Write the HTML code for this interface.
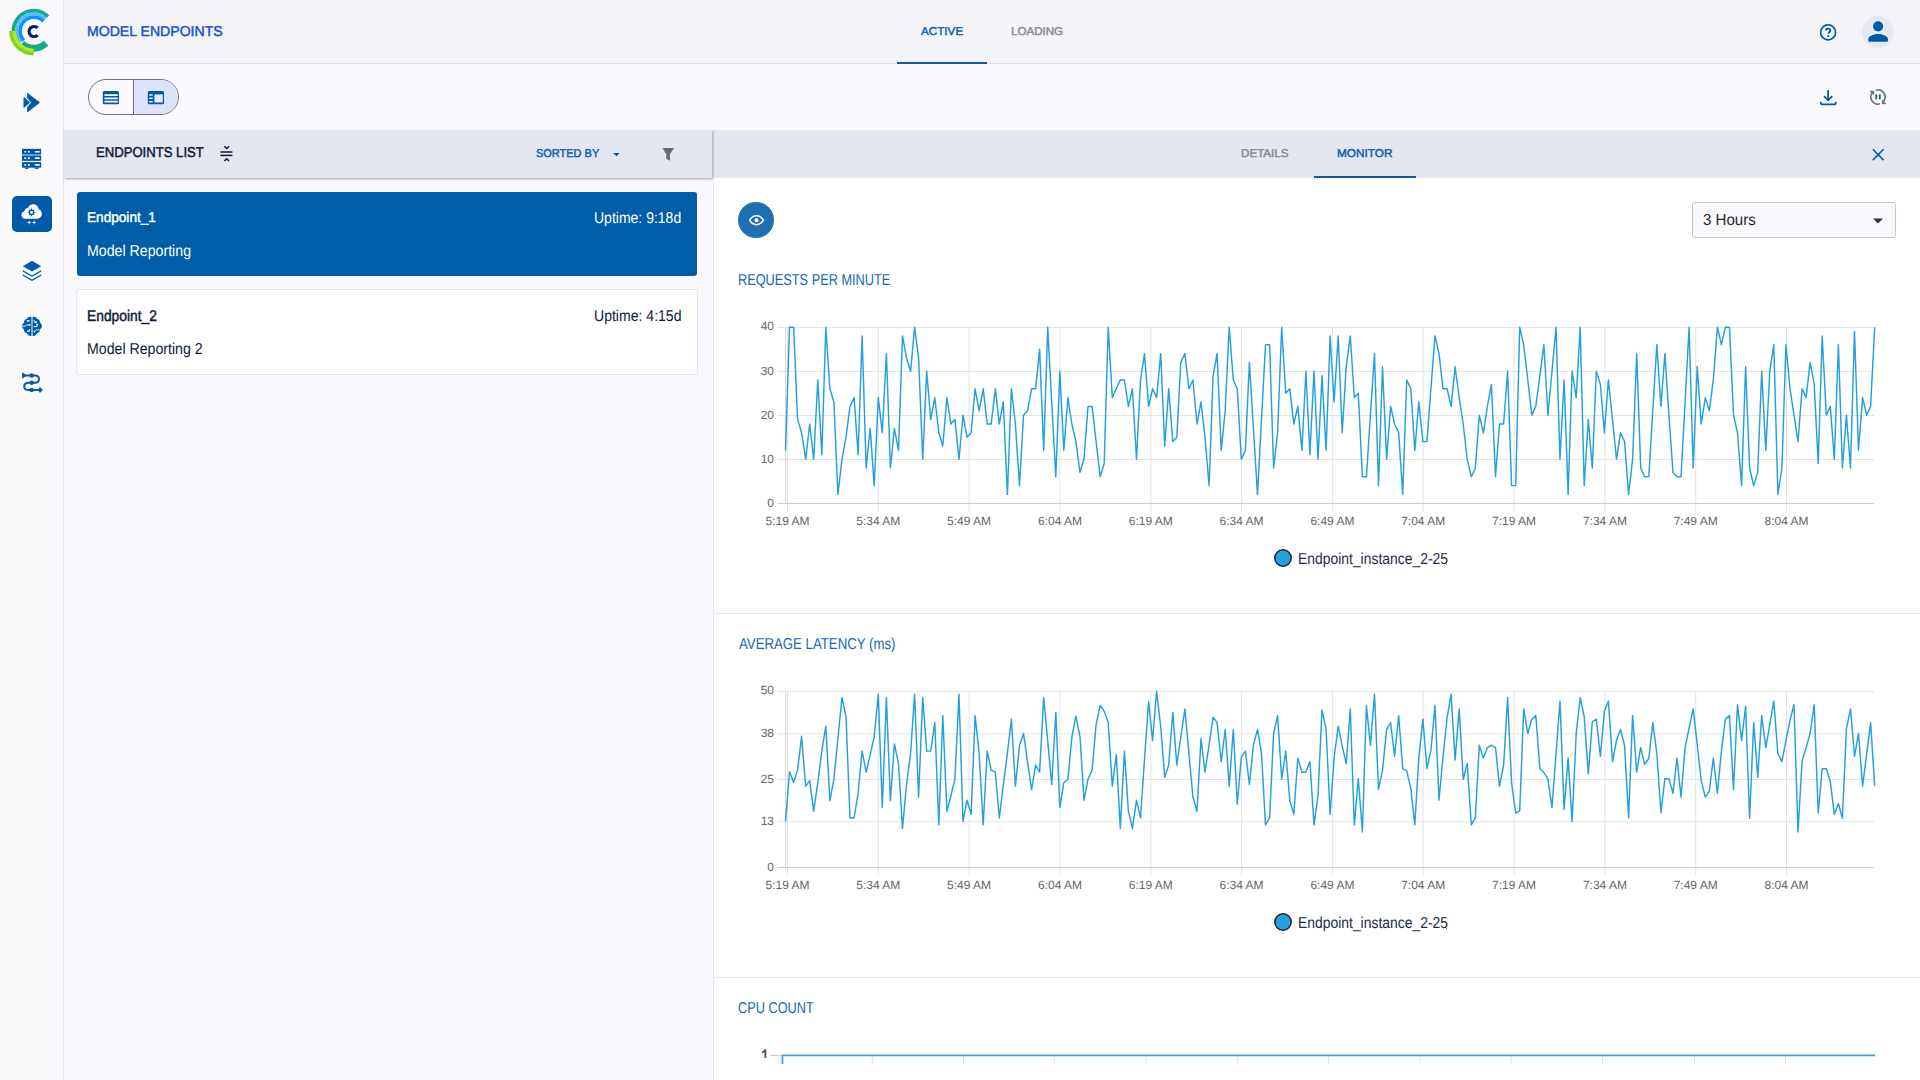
<!DOCTYPE html>
<html>
<head>
<meta charset="utf-8">
<style>
*{box-sizing:border-box;margin:0;padding:0}
html,body{width:1920px;height:1080px;overflow:hidden}
body{font-family:"Liberation Sans",sans-serif;background:#fafafd;position:relative}
.abs{position:absolute}
#sidebar{left:0;top:0;width:64px;height:1080px;background:#fafafd;border-right:1px solid #e4e6ef}
#header{left:64px;top:0;width:1856px;height:64px;background:#f4f4f9;border-bottom:1px solid #dfe3ee}
#toolbar{left:64px;top:64px;width:1856px;height:66px;background:#f9f9fe}
#listpanel{left:64px;top:130px;width:650px;height:950px;background:#f9f8fe;border-right:1px solid #e4e7f0}
#listhead{left:64px;top:130px;width:648px;height:48px;background:#e4e7f0;box-shadow:0.5px 1px 2px rgba(0,0,0,0.35)}
#rightpanel{left:714px;top:130px;width:1206px;height:950px;background:#ffffff}
#righthead{left:713px;top:130px;width:1207px;height:48px;background:#e4e7f0}
.txt{position:absolute;white-space:nowrap;line-height:1;text-rendering:geometricPrecision}
.card{position:absolute;left:77px;width:620px;height:84px;border-radius:3px}
.divider{position:absolute;left:714px;width:1206px;height:1px;background:#e4e7f0}
svg text.yl,svg text.xl{font-family:"Liberation Sans",sans-serif;font-size:12px;fill:#666666;text-rendering:geometricPrecision}
</style>
</head>
<body>
<div id="sidebar" class="abs">
  <!-- logo -->
  <svg class="abs" style="left:0;top:0" width="64" height="64" viewBox="0 0 64 64">
    <g fill="none">
      <path d="M48.05 16.55 A20.3 20.3 0 0 0 13.40 30.90" stroke="#17a98b" stroke-width="3.6"/>
      <path d="M45.72 18.88 A17 17 0 0 0 21.07 42.28" stroke="#55bbff" stroke-width="3.0"/>
      <path d="M43.42 21.18 A13.75 13.75 0 0 0 23.81 40.45" stroke="#0a92ff" stroke-width="3.5"/>
      <path d="M21.87 43.59 A17.35 17.35 0 0 0 45.97 43.17" stroke="#17a98b" stroke-width="6.9"/>
      <path d="M14.30 30.90 A19.4 19.4 0 0 0 33.70 50.30" stroke="#b5e81a" stroke-width="3.3"/>
      <path d="M10.95 30.90 A22.75 22.75 0 0 0 33.70 53.65" stroke="#7fd421" stroke-width="3.5"/>
    </g>
    <path d="M37.6 27.9 A5 5 0 1 0 37.6 35.1" fill="none" stroke="#0a1a6b" stroke-width="3.2"/>
  </svg>
  <!-- pipelines -->
  <svg class="abs" style="left:20px;top:90px" width="24" height="26" viewBox="0 0 24 26">
    <path d="M3.9 7.6 L9.8 12.5 L3.9 17.4 Z" fill="#005aa8" stroke="#005aa8" stroke-width="0.7" stroke-linejoin="round"/>
    <path d="M7.5 3.3 L19.6 12.5 L7.5 22 L7.5 17.1 L11.5 12.5 L7.5 8.1 Z" fill="#005aa8" stroke="#005aa8" stroke-width="0.7" stroke-linejoin="round"/>
  </svg>
  <!-- servers -->
  <svg class="abs" style="left:20px;top:146px" width="24" height="24" viewBox="0 0 24 24">
    <rect x="2" y="2.8" width="19.1" height="5.2" fill="#005aa8"/>
    <rect x="2" y="8" width="19.1" height="1.9" fill="#6b9bc4"/>
    <rect x="2" y="9.9" width="19.1" height="4.95" fill="#005aa8"/>
    <rect x="2" y="16.1" width="19.1" height="5.6" fill="#005aa8"/>
    <rect x="5" y="21.5" width="3.4" height="1.4" fill="#005aa8"/>
    <rect x="14.85" y="21.5" width="3.6" height="1.4" fill="#005aa8"/>
    <g fill="#fafafd">
      <rect x="4.3" y="5" width="1.9" height="1.6" rx="0.5"/><rect x="7.9" y="5" width="1.9" height="1.6" rx="0.5"/><rect x="14.85" y="5" width="4.9" height="1.6" rx="0.4"/>
      <rect x="4.3" y="11.2" width="1.9" height="1.8" rx="0.5"/><rect x="7.9" y="11.2" width="1.9" height="1.8" rx="0.5"/><rect x="14.85" y="11.2" width="4.9" height="1.8" rx="0.4"/>
      <rect x="4.3" y="18" width="1.9" height="1.8" rx="0.5"/><rect x="7.9" y="18" width="1.9" height="1.8" rx="0.5"/><rect x="14.85" y="18" width="4.9" height="1.8" rx="0.4"/>
    </g>
  </svg>
  <!-- active: serving -->
  <div class="abs" style="left:12px;top:196px;width:40px;height:36px;border-radius:5px;background:#005aa6"></div>
  <svg class="abs" style="left:20px;top:202px" width="24" height="26" viewBox="0 0 24 26">
    <path d="M5 16.7 C2.8 16.7 1.4 15 1.4 13 C1.4 11.1 2.6 9.6 4.4 9.3 C4.6 7.4 6 6 7.9 5.9 C8.8 3.7 10.9 2.3 13.2 2.3 C16 2.3 18.3 4.4 18.6 7.1 C20.5 7.7 21.85 9.6 21.85 11.8 C21.85 14.5 19.8 16.7 17.2 16.7 Z" fill="#ffffff"/>
    <polygon points="11.50,6.20 10.54,8.09 8.53,7.43 9.19,9.44 7.30,10.40 9.19,11.36 8.53,13.37 10.54,12.71 11.50,14.60 12.46,12.71 14.47,13.37 13.81,11.36 15.70,10.40 13.81,9.44 14.47,7.43 12.46,8.09" fill="#005aa8"/>
    <circle cx="11.5" cy="10.4" r="1.45" fill="#ffffff"/>
    <polygon points="9.15,18.05 8.62,20.02 6.65,20.55 8.62,21.08 9.15,23.05 9.68,21.08 11.65,20.55 9.68,20.02" fill="#ffffff"/>
    <polygon points="14.10,18.05 13.57,20.02 11.60,20.55 13.57,21.08 14.10,23.05 14.63,21.08 16.60,20.55 14.63,20.02" fill="#ffffff"/>
  </svg>
  <!-- layers -->
  <svg class="abs" style="left:20px;top:258px" width="24" height="24" viewBox="0 0 24 24">
    <path d="M12 2.8 L21.2 8.2 L12 13.6 L2.8 8.2 Z" fill="#0b5aa6"/>
    <path d="M2.8 12 L12 17.4 L21.2 12 L21.2 13.6 L12 19 L2.8 13.6 Z" fill="#0b5aa6"/>
    <path d="M2.8 16.2 L12 21.6 L21.2 16.2 L21.2 17.8 L12 23 L2.8 17.8 Z" fill="#0b5aa6"/>
  </svg>
  <!-- brain -->
  <svg class="abs" style="left:20px;top:314px" width="24" height="24" viewBox="0 0 24 24">
    <path d="M11.5 3 C9.6 2.4 7.6 3.2 6.9 4.8 C5.1 5 3.9 6.6 4.1 8.4 C2.6 9.4 1.7 11.2 2.2 13 C2.5 14.1 3.2 14.8 3.9 15.2 C3.8 17.2 5.1 18.9 6.9 19.3 C7.6 21.1 9.7 22.4 11.5 21.8 Z" fill="#005aa8"/>
    <path d="M12.5 3 C14.4 2.4 16.4 3.2 17.1 4.8 C18.9 5 20.1 6.6 19.9 8.4 C21.4 9.4 22.3 11.2 21.8 13 C21.5 14.1 20.8 14.8 20.1 15.2 C20.2 17.2 18.9 18.9 17.1 19.3 C16.4 21.1 14.3 22.4 12.5 21.8 Z" fill="#005aa8"/>
    <g stroke="#fafafd" stroke-width="0.9" fill="none">
      <path d="M2.3 12.1 H5.6 L6.8 10.9 H9.2"/><path d="M7.6 6.8 H10"/><path d="M9.6 15 V17.2 H8.2"/>
      <path d="M14.2 6 V8.2 H15.8"/><path d="M13.6 12.6 H17.2 V10.6"/><path d="M14.6 17.5 L16.2 15.9 H19.6"/>
    </g>
    <g fill="#fafafd"><circle cx="9.6" cy="10.9" r="0.9"/><circle cx="7.6" cy="6.8" r="0.9"/><circle cx="8" cy="17.2" r="0.9"/><circle cx="16" cy="8.2" r="0.9"/><circle cx="17.2" cy="10.4" r="0.9"/><circle cx="14.4" cy="17.6" r="0.9"/></g>
  </svg>
  <!-- workflow -->
  <svg class="abs" style="left:20px;top:370px" width="24" height="24" viewBox="0 0 24 24">
    <g fill="none" stroke="#0b5aa6" stroke-width="1.9">
      <path d="M2 5.5 H15 C18 5.5 19 7.5 19 9.2 C19 11 17.8 12.8 15 12.8 H8.5 C5.5 12.8 4.2 14.6 4.2 16.5 C4.2 18.3 5.4 20 8.5 20 H21.5"/>
      <path d="M2.2 3.2 L5 5.5 L2.2 7.8"/>
      <path d="M19.3 17.8 L21.6 20 L19.3 22.2"/>
    </g>
    <circle cx="11.7" cy="5.5" r="2.2" fill="#0b5aa6"/>
    <circle cx="11.7" cy="12.8" r="2.2" fill="#0b5aa6"/>
    <circle cx="11.7" cy="20" r="2.2" fill="#0b5aa6"/>
  </svg>
</div>

<div id="header" class="abs">
  <div class="abs" style="left:833px;top:62px;width:90px;height:2px;background:#0d5aa7"></div>
  <!-- help -->
  <svg class="abs" style="left:1752px;top:20px" width="24" height="24" viewBox="0 0 24 24">
    <circle cx="12.1" cy="12.4" r="7.5" fill="none" stroke="#005aa8" stroke-width="1.7"/>
    <path d="M9.9 10.6 C9.9 9.3 10.8 8.6 12.1 8.6 C13.4 8.6 14.3 9.4 14.3 10.4 C14.3 11.8 12.4 12 12.2 13.6" fill="none" stroke="#005aa8" stroke-width="1.9"/>
    <circle cx="12.2" cy="16.1" r="1.05" fill="#005aa8"/>
  </svg>
  <!-- avatar -->
  <div class="abs" style="left:1798px;top:16px;width:32px;height:32px;border-radius:50%;background:#e6e9f1"></div>
  <svg class="abs" style="left:1802px;top:20px" width="24" height="24" viewBox="0 0 24 24">
    <circle cx="12.1" cy="6.4" r="5.05" fill="#005aa8"/>
    <path d="M2.2 19.4 C2.2 16.6 6.6 14 12.1 14 C17.6 14 22 16.6 22 19.4 V20.2 C22 21.1 21.3 21.8 20.4 21.8 H3.8 C2.9 21.8 2.2 21.1 2.2 20.2 Z" fill="#005aa8"/>
  </svg>
</div>

<div id="toolbar" class="abs">
  <div class="abs" style="left:24px;top:15px;width:91px;height:36px;border:1px solid #6e7178;border-radius:18px;overflow:hidden;background:#fafafd">
    <div class="abs" style="left:44px;top:0;width:46px;height:34px;background:#dde3fb;border-left:1px solid #6e7178"></div>
  </div>
  <svg class="abs" style="left:38px;top:26px" width="18" height="16" viewBox="0 0 18 16">
    <rect x="0.8" y="0.9" width="16.2" height="13.35" rx="1.6" fill="#005aa8"/>
    <rect x="2.4" y="4.25" width="13.4" height="1.65" rx="0.3" fill="#fafafd"/>
    <rect x="2.4" y="7.5" width="13.4" height="1.75" rx="0.3" fill="#fafafd"/>
    <rect x="2.4" y="10.8" width="13.4" height="1.7" rx="0.3" fill="#fafafd"/>
  </svg>
  <svg class="abs" style="left:83px;top:26px" width="18" height="16" viewBox="0 0 18 16">
    <rect x="0.8" y="0.9" width="16.2" height="13.35" rx="1.6" fill="#005aa8"/>
    <rect x="2.1" y="4.3" width="3.7" height="1.5" rx="0.4" fill="#e4e9fc"/>
    <rect x="2.1" y="7.6" width="3.7" height="1.5" rx="0.4" fill="#e4e9fc"/>
    <rect x="2.1" y="10.9" width="3.7" height="1.5" rx="0.4" fill="#e4e9fc"/>
    <rect x="7.4" y="4.4" width="8.4" height="8.1" fill="#e4e9fc"/>
  </svg>
  <!-- download -->
  <svg class="abs" style="left:1752px;top:21px" width="24" height="24" viewBox="0 0 24 24">
    <g fill="none" stroke="#005aa8" stroke-width="1.8">
      <path d="M12.1 4.9 V15.2"/><path d="M8 11.1 L12.1 15.3 L16.3 11.1"/>
    </g>
    <path d="M4.9 16.8 V18.2 C4.9 18.8 5.3 19.3 5.9 19.3 H18.7 C19.3 19.3 19.7 18.8 19.7 18.2 V16.8" fill="none" stroke="#005aa8" stroke-width="1.75"/>
  </svg>
  <!-- refresh/pause -->
  <svg class="abs" style="left:1802px;top:21px" width="24" height="24" viewBox="0 0 24 24">
    <path d="M9.8 5.25 A7.1 7.1 0 0 1 17.44 16.56" fill="none" stroke="#6b6e76" stroke-width="1.6"/>
    <path d="M13.96 18.83 A7.1 7.1 0 0 1 6.56 7.44" fill="none" stroke="#6b6e76" stroke-width="1.6"/>
    <path d="M16.1 14.9 L16.1 19 L20.1 18.8 Z" fill="#6b6e76" stroke="#6b6e76" stroke-width="0.4" stroke-linejoin="round"/>
    <path d="M3.9 6 L7.9 6 L7.9 10 Z" fill="#6b6e76" stroke="#6b6e76" stroke-width="0.4" stroke-linejoin="round"/>
    <rect x="9.3" y="9.3" width="1.8" height="5.1" rx="0.9" fill="#0a6e55"/>
    <rect x="12.9" y="9.3" width="1.8" height="5.1" rx="0.9" fill="#0a6e55"/>
  </svg>
</div>

<div id="listpanel" class="abs"></div>
<div id="rightpanel" class="abs"></div>
<div id="righthead" class="abs">
  <div class="abs" style="left:601px;top:46px;width:102px;height:2px;background:#0d5aa7"></div>
  <svg class="abs" style="left:1153px;top:12px" width="24" height="24" viewBox="0 0 24 24"><g stroke="#005aa8" stroke-width="1.6"><path d="M6.8 7.3 L17.6 18.1 M17.6 7.3 L6.8 18.1"/></g></svg>
</div>

<div id="listhead" class="abs">
  <svg class="abs" style="left:153px;top:14px" width="18" height="20" viewBox="0 0 18 20">
    <g fill="none" stroke="#0c1a36" stroke-width="1.5">
      <path d="M3.4 8 H15.4"/><path d="M3.4 11.4 H15.4"/>
      <path d="M7.4 2.3 L9.7 4.5 L12.1 2.3"/><path d="M7.4 17 L9.7 14.8 L12.1 17"/>
    </g>
  </svg>
  <svg class="abs" style="left:548px;top:22px" width="10" height="6" viewBox="0 0 10 6"><path d="M1.2 1 L7.8 1 L4.5 4.2 Z" fill="#005aa8"/></svg>
  <svg class="abs" style="left:596px;top:16px" width="16" height="16" viewBox="0 0 16 16"><path d="M2.5 2.1 H14 L9.95 8.2 V14.8 L6.25 12.8 V8.2 Z" fill="#686b74"/></svg>
</div>

<div class="card" style="top:192px;background:#005ea8">
</div>
<div class="card" style="top:289px;left:76px;width:622px;height:86px;background:#ffffff;border:1px solid #e4e6ee">
</div>

<!-- eye button -->
<div class="abs" style="left:738px;top:202px;width:36px;height:36px;border-radius:50%;background:#1e70b1"></div>
<svg class="abs" style="left:744px;top:208px" width="24" height="24" viewBox="0 0 24 24">
  <path d="M5.6 12.2 C7.3 9.2 9.7 7.7 12.5 7.7 C15.3 7.7 17.7 9.2 19.4 12.2 C17.7 15.2 15.3 16.7 12.5 16.7 C9.7 16.7 7.3 15.2 5.6 12.2 Z" fill="none" stroke="#fff" stroke-width="1.45"/>
  <circle cx="12.5" cy="12.2" r="1.95" fill="#fff"/>
</svg>

<!-- select -->
<div class="abs" style="left:1692px;top:202px;width:204px;height:36px;border:1px solid #c4c6cc;border-radius:3px;background:#f9f9fd">
  <svg class="abs" style="left:179px;top:14px" width="12" height="8" viewBox="0 0 12 8"><path d="M1 1.5 L11 1.5 L6 6.5 Z" fill="#333"/></svg>
</div>
<div class="divider" style="top:613px"></div>
<div class="divider" style="top:977px"></div>

<!-- legends -->
<svg class="abs" style="left:1272px;top:547px" width="22" height="22" viewBox="0 0 22 22"><circle cx="11" cy="11" r="8.2" fill="#27a1dd" stroke="#1d2330" stroke-width="1.5"/></svg>
<div class="abs" style="left:1446px;top:563.5px;width:1.2px;height:1.4px;background:#5a6478"></div>
<div class="abs" style="left:1446px;top:927.5px;width:1.2px;height:1.4px;background:#5a6478"></div>
<svg class="abs" style="left:1272px;top:911px" width="22" height="22" viewBox="0 0 22 22"><circle cx="11" cy="11" r="8.2" fill="#27a1dd" stroke="#1d2330" stroke-width="1.5"/></svg>

<svg class="abs" style="left:0;top:0" width="1920" height="1080" viewBox="0 0 1920 1080">
<line x1="787.5" y1="327.5" x2="787.5" y2="511.5" stroke="#e3e3e3" stroke-width="1"/>
<text x="787.5" y="525.0" text-anchor="middle" class="xl">5:19 AM</text>
<line x1="878.3" y1="327.5" x2="878.3" y2="511.5" stroke="#e3e3e3" stroke-width="1"/>
<text x="878.3" y="525.0" text-anchor="middle" class="xl">5:34 AM</text>
<line x1="969.1" y1="327.5" x2="969.1" y2="511.5" stroke="#e3e3e3" stroke-width="1"/>
<text x="969.1" y="525.0" text-anchor="middle" class="xl">5:49 AM</text>
<line x1="1060.0" y1="327.5" x2="1060.0" y2="511.5" stroke="#e3e3e3" stroke-width="1"/>
<text x="1060.0" y="525.0" text-anchor="middle" class="xl">6:04 AM</text>
<line x1="1150.8" y1="327.5" x2="1150.8" y2="511.5" stroke="#e3e3e3" stroke-width="1"/>
<text x="1150.8" y="525.0" text-anchor="middle" class="xl">6:19 AM</text>
<line x1="1241.6" y1="327.5" x2="1241.6" y2="511.5" stroke="#e3e3e3" stroke-width="1"/>
<text x="1241.6" y="525.0" text-anchor="middle" class="xl">6:34 AM</text>
<line x1="1332.4" y1="327.5" x2="1332.4" y2="511.5" stroke="#e3e3e3" stroke-width="1"/>
<text x="1332.4" y="525.0" text-anchor="middle" class="xl">6:49 AM</text>
<line x1="1423.2" y1="327.5" x2="1423.2" y2="511.5" stroke="#e3e3e3" stroke-width="1"/>
<text x="1423.2" y="525.0" text-anchor="middle" class="xl">7:04 AM</text>
<line x1="1514.1" y1="327.5" x2="1514.1" y2="511.5" stroke="#e3e3e3" stroke-width="1"/>
<text x="1514.1" y="525.0" text-anchor="middle" class="xl">7:19 AM</text>
<line x1="1604.9" y1="327.5" x2="1604.9" y2="511.5" stroke="#e3e3e3" stroke-width="1"/>
<text x="1604.9" y="525.0" text-anchor="middle" class="xl">7:34 AM</text>
<line x1="1695.7" y1="327.5" x2="1695.7" y2="511.5" stroke="#e3e3e3" stroke-width="1"/>
<text x="1695.7" y="525.0" text-anchor="middle" class="xl">7:49 AM</text>
<line x1="1786.5" y1="327.5" x2="1786.5" y2="511.5" stroke="#e3e3e3" stroke-width="1"/>
<text x="1786.5" y="525.0" text-anchor="middle" class="xl">8:04 AM</text>
<line x1="777.5" y1="503.5" x2="1874" y2="503.5" stroke="#cccccc" stroke-width="1"/>
<text x="774" y="507.1" text-anchor="end" class="yl">0</text>
<line x1="777.5" y1="459.5" x2="1874" y2="459.5" stroke="#e3e3e3" stroke-width="1"/>
<text x="774" y="463.1" text-anchor="end" class="yl">10</text>
<line x1="777.5" y1="415.5" x2="1874" y2="415.5" stroke="#e3e3e3" stroke-width="1"/>
<text x="774" y="419.1" text-anchor="end" class="yl">20</text>
<line x1="777.5" y1="371.5" x2="1874" y2="371.5" stroke="#e3e3e3" stroke-width="1"/>
<text x="774" y="375.1" text-anchor="end" class="yl">30</text>
<line x1="777.5" y1="327.5" x2="1874" y2="327.5" stroke="#e3e3e3" stroke-width="1"/>
<text x="774" y="330.3" text-anchor="end" class="yl">40</text>
<line x1="785.6" y1="327.5" x2="785.6" y2="503.5" stroke="#d6d6d6" stroke-width="1"/>
<polyline fill="none" stroke="#24a0dc" stroke-width="1.45" stroke-linejoin="round" points="785.5,450.4 789.5,327.2 793.6,327.2 797.6,419.6 801.6,432.8 805.7,459.2 809.7,424.0 813.7,459.2 817.8,380.0 821.8,454.8 825.8,327.2 829.9,388.8 833.9,402.0 837.9,494.4 842.0,459.2 846.0,437.2 850.0,406.4 854.1,397.6 858.1,454.8 862.1,336.0 866.2,468.0 870.2,428.4 874.2,485.6 878.3,397.6 882.3,432.8 886.4,353.6 890.4,468.0 894.4,428.4 898.5,450.4 902.5,336.0 906.5,358.0 910.6,371.2 914.6,327.2 918.6,358.0 922.7,459.2 926.7,371.2 930.7,419.6 934.8,397.6 938.8,432.8 942.8,446.0 946.9,397.6 950.9,424.0 954.9,419.6 959.0,459.2 963.0,415.2 967.0,437.2 971.1,432.8 975.1,388.8 979.1,410.8 983.2,388.8 987.2,424.0 991.2,424.0 995.3,388.8 999.3,424.0 1003.3,402.0 1007.4,494.4 1011.4,388.8 1015.4,424.0 1019.5,485.6 1023.5,415.2 1027.5,410.8 1031.6,388.8 1035.6,388.8 1039.6,349.2 1043.7,450.4 1047.7,327.2 1051.7,402.0 1055.8,476.8 1059.8,371.2 1063.8,450.4 1067.9,397.6 1071.9,424.0 1075.9,441.6 1080.0,472.4 1084.0,459.2 1088.0,406.4 1092.1,406.4 1096.1,441.6 1100.2,476.8 1104.2,463.6 1108.2,327.2 1112.3,397.6 1116.3,388.8 1120.3,380.0 1124.4,380.0 1128.4,406.4 1132.4,388.8 1136.5,459.2 1140.5,380.0 1144.5,353.6 1148.6,406.4 1152.6,388.8 1156.6,397.6 1160.7,353.6 1164.7,446.0 1168.7,388.8 1172.8,441.6 1176.8,437.2 1180.8,362.4 1184.9,353.6 1188.9,388.8 1192.9,380.0 1197.0,424.0 1201.0,402.0 1205.0,437.2 1209.1,485.6 1213.1,375.6 1217.1,353.6 1221.2,450.4 1225.2,410.8 1229.2,327.2 1233.3,380.0 1237.3,388.8 1241.3,459.2 1245.4,450.4 1249.4,362.4 1253.4,428.4 1257.5,494.4 1261.5,419.6 1265.5,344.8 1269.6,344.8 1273.6,468.0 1277.6,432.8 1281.7,327.2 1285.7,393.2 1289.8,388.8 1293.8,424.0 1297.8,406.4 1301.9,450.4 1305.9,371.2 1309.9,454.8 1314.0,371.2 1318.0,459.2 1322.0,375.6 1326.1,450.4 1330.1,336.0 1334.1,402.0 1338.2,336.0 1342.2,432.8 1346.2,366.8 1350.3,336.0 1354.3,397.6 1358.3,393.2 1362.4,476.8 1366.4,476.8 1370.4,415.2 1374.5,353.6 1378.5,485.6 1382.5,366.8 1386.6,459.2 1390.6,406.4 1394.6,424.0 1398.7,432.8 1402.7,494.4 1406.7,380.0 1410.8,388.8 1414.8,450.4 1418.8,402.0 1422.9,441.6 1426.9,441.6 1430.9,388.8 1435.0,336.0 1439.0,353.6 1443.0,388.8 1447.1,388.8 1451.1,406.4 1455.1,366.8 1459.2,397.6 1463.2,424.0 1467.2,459.2 1471.3,476.8 1475.3,468.0 1479.3,415.2 1483.4,432.8 1487.4,406.4 1491.4,384.4 1495.5,476.8 1499.5,424.0 1503.6,424.0 1507.6,371.2 1511.6,485.6 1515.7,485.6 1519.7,327.2 1523.7,344.8 1527.8,380.0 1531.8,415.2 1535.8,406.4 1539.9,375.6 1543.9,344.8 1547.9,415.2 1552.0,371.2 1556.0,327.2 1560.0,459.2 1564.1,380.0 1568.1,494.4 1572.1,371.2 1576.2,397.6 1580.2,327.2 1584.2,485.6 1588.3,419.6 1592.3,468.0 1596.3,371.2 1600.4,384.4 1604.4,432.8 1608.4,380.0 1612.5,419.6 1616.5,459.2 1620.5,432.8 1624.6,441.6 1628.6,494.4 1632.6,459.2 1636.7,353.6 1640.7,468.0 1644.7,476.8 1648.8,476.8 1652.8,410.8 1656.8,344.8 1660.9,406.4 1664.9,353.6 1668.9,415.2 1673.0,472.4 1677.0,476.8 1681.0,476.8 1685.1,402.0 1689.1,327.2 1693.2,468.0 1697.2,366.8 1701.2,424.0 1705.3,397.6 1709.3,410.8 1713.3,380.0 1717.4,327.2 1721.4,344.8 1725.4,327.2 1729.5,327.2 1733.5,415.2 1737.5,432.8 1741.6,485.6 1745.6,366.8 1749.6,468.0 1753.7,485.6 1757.7,472.4 1761.7,371.2 1765.8,450.4 1769.8,371.2 1773.8,344.8 1777.9,494.4 1781.9,468.0 1785.9,344.8 1790.0,388.8 1794.0,415.2 1798.0,441.6 1802.1,388.8 1806.1,397.6 1810.1,362.4 1814.2,384.4 1818.2,463.6 1822.2,336.0 1826.3,415.2 1830.3,406.4 1834.3,459.2 1838.4,344.8 1842.4,468.0 1846.4,415.2 1850.5,468.0 1854.5,331.6 1858.5,450.4 1862.6,397.6 1866.6,415.2 1870.6,406.4 1874.7,327.2"/>
<line x1="787.5" y1="691.6" x2="787.5" y2="875.4" stroke="#e3e3e3" stroke-width="1"/>
<text x="787.5" y="888.9" text-anchor="middle" class="xl">5:19 AM</text>
<line x1="878.3" y1="691.6" x2="878.3" y2="875.4" stroke="#e3e3e3" stroke-width="1"/>
<text x="878.3" y="888.9" text-anchor="middle" class="xl">5:34 AM</text>
<line x1="969.1" y1="691.6" x2="969.1" y2="875.4" stroke="#e3e3e3" stroke-width="1"/>
<text x="969.1" y="888.9" text-anchor="middle" class="xl">5:49 AM</text>
<line x1="1060.0" y1="691.6" x2="1060.0" y2="875.4" stroke="#e3e3e3" stroke-width="1"/>
<text x="1060.0" y="888.9" text-anchor="middle" class="xl">6:04 AM</text>
<line x1="1150.8" y1="691.6" x2="1150.8" y2="875.4" stroke="#e3e3e3" stroke-width="1"/>
<text x="1150.8" y="888.9" text-anchor="middle" class="xl">6:19 AM</text>
<line x1="1241.6" y1="691.6" x2="1241.6" y2="875.4" stroke="#e3e3e3" stroke-width="1"/>
<text x="1241.6" y="888.9" text-anchor="middle" class="xl">6:34 AM</text>
<line x1="1332.4" y1="691.6" x2="1332.4" y2="875.4" stroke="#e3e3e3" stroke-width="1"/>
<text x="1332.4" y="888.9" text-anchor="middle" class="xl">6:49 AM</text>
<line x1="1423.2" y1="691.6" x2="1423.2" y2="875.4" stroke="#e3e3e3" stroke-width="1"/>
<text x="1423.2" y="888.9" text-anchor="middle" class="xl">7:04 AM</text>
<line x1="1514.1" y1="691.6" x2="1514.1" y2="875.4" stroke="#e3e3e3" stroke-width="1"/>
<text x="1514.1" y="888.9" text-anchor="middle" class="xl">7:19 AM</text>
<line x1="1604.9" y1="691.6" x2="1604.9" y2="875.4" stroke="#e3e3e3" stroke-width="1"/>
<text x="1604.9" y="888.9" text-anchor="middle" class="xl">7:34 AM</text>
<line x1="1695.7" y1="691.6" x2="1695.7" y2="875.4" stroke="#e3e3e3" stroke-width="1"/>
<text x="1695.7" y="888.9" text-anchor="middle" class="xl">7:49 AM</text>
<line x1="1786.5" y1="691.6" x2="1786.5" y2="875.4" stroke="#e3e3e3" stroke-width="1"/>
<text x="1786.5" y="888.9" text-anchor="middle" class="xl">8:04 AM</text>
<line x1="777.5" y1="867.4" x2="1874" y2="867.4" stroke="#cccccc" stroke-width="1"/>
<text x="774" y="871.0" text-anchor="end" class="yl">0</text>
<line x1="777.5" y1="821.7" x2="1874" y2="821.7" stroke="#e3e3e3" stroke-width="1"/>
<text x="774" y="825.3" text-anchor="end" class="yl">13</text>
<line x1="777.5" y1="779.5" x2="1874" y2="779.5" stroke="#e3e3e3" stroke-width="1"/>
<text x="774" y="783.1" text-anchor="end" class="yl">25</text>
<line x1="777.5" y1="733.8" x2="1874" y2="733.8" stroke="#e3e3e3" stroke-width="1"/>
<text x="774" y="737.4" text-anchor="end" class="yl">38</text>
<line x1="777.5" y1="691.6" x2="1874" y2="691.6" stroke="#e3e3e3" stroke-width="1"/>
<text x="774" y="694.4" text-anchor="end" class="yl">50</text>
<line x1="785.6" y1="691.6" x2="785.6" y2="867.4" stroke="#d6d6d6" stroke-width="1"/>
<polyline fill="none" stroke="#24a0dc" stroke-width="1.45" stroke-linejoin="round" points="785.5,821.4 789.5,771.8 793.6,782.4 797.6,770.1 801.6,736.3 805.7,786.2 809.7,780.6 813.7,811.2 817.8,782.7 821.8,751.1 825.8,726.1 829.9,800.6 833.9,779.2 837.9,738.4 842.0,697.6 846.0,716.6 850.0,817.9 854.1,817.9 858.1,793.3 862.1,751.1 866.2,772.2 870.2,754.6 874.2,737.0 878.3,694.1 882.3,807.3 886.4,697.6 890.4,800.6 894.4,744.0 898.5,763.7 902.5,828.4 906.5,784.8 910.6,753.2 914.6,694.1 918.6,797.1 922.7,697.6 926.7,751.1 930.7,751.1 934.8,722.6 938.8,824.9 942.8,715.6 946.9,811.2 950.9,795.7 954.9,779.2 959.0,694.1 963.0,821.4 967.0,800.3 971.1,814.4 975.1,715.6 979.1,753.2 983.2,824.9 987.2,751.1 991.2,770.1 995.3,772.2 999.3,817.9 1003.3,784.8 1007.4,753.2 1011.4,719.1 1015.4,786.2 1019.5,745.4 1023.5,733.5 1027.5,761.6 1031.6,789.7 1035.6,765.1 1039.6,772.2 1043.7,697.6 1047.7,740.9 1051.7,784.5 1055.8,712.4 1059.8,807.3 1063.8,782.7 1067.9,779.2 1071.9,737.0 1075.9,715.9 1080.0,737.0 1084.0,800.3 1088.0,779.2 1092.1,770.1 1096.1,724.7 1100.2,705.4 1104.2,711.3 1108.2,722.6 1112.3,786.2 1116.3,754.6 1120.3,828.4 1124.4,751.1 1128.4,811.2 1132.4,828.4 1136.5,800.3 1140.5,817.9 1144.5,759.5 1148.6,701.8 1152.6,740.5 1156.6,691.3 1160.7,726.5 1164.7,777.4 1168.7,765.1 1172.8,712.4 1176.8,765.1 1180.8,737.0 1184.9,708.9 1188.9,753.2 1192.9,796.8 1197.0,811.2 1201.0,738.4 1205.0,772.2 1209.1,744.7 1213.1,717.3 1217.1,722.6 1221.2,761.6 1225.2,729.6 1229.2,786.2 1233.3,729.6 1237.3,804.2 1241.3,757.4 1245.4,751.1 1249.4,784.5 1253.4,745.1 1257.5,729.6 1261.5,753.2 1265.5,824.9 1269.6,817.9 1273.6,733.5 1277.6,715.6 1281.7,779.2 1285.7,751.1 1289.8,800.6 1293.8,814.4 1297.8,758.1 1301.9,772.2 1305.9,772.2 1309.9,761.6 1314.0,824.9 1318.0,795.7 1322.0,709.9 1326.1,729.6 1330.1,814.4 1334.1,758.1 1338.2,726.1 1342.2,745.8 1346.2,763.7 1350.3,708.9 1354.3,824.9 1358.3,778.8 1362.4,831.9 1366.4,705.4 1370.4,745.4 1374.5,694.1 1378.5,789.4 1382.5,770.4 1386.6,729.6 1390.6,722.6 1394.6,756.3 1398.7,715.6 1402.7,768.7 1406.7,770.8 1410.8,788.3 1414.8,824.9 1418.8,758.1 1422.9,719.1 1426.9,768.7 1430.9,750.4 1435.0,705.4 1439.0,800.3 1443.0,756.7 1447.1,717.7 1451.1,694.1 1455.1,759.9 1459.2,708.9 1463.2,779.2 1467.2,763.4 1471.3,824.9 1475.3,817.9 1479.3,745.1 1483.4,758.1 1487.4,747.6 1491.4,745.1 1495.5,747.6 1499.5,786.2 1503.6,765.5 1507.6,697.6 1511.6,783.1 1515.7,813.0 1519.7,810.8 1523.7,708.9 1527.8,733.5 1531.8,719.4 1535.8,715.6 1539.9,768.7 1543.9,772.5 1547.9,779.2 1552.0,807.3 1556.0,754.2 1560.0,701.1 1564.1,809.4 1568.1,758.1 1572.1,821.4 1576.2,733.5 1580.2,697.6 1584.2,716.6 1588.3,773.9 1592.3,721.9 1596.3,719.1 1600.4,756.3 1604.4,711.3 1608.4,701.1 1612.5,761.6 1616.5,740.5 1620.5,729.6 1624.6,745.8 1628.6,817.9 1632.6,715.6 1636.7,772.2 1640.7,747.6 1644.7,764.4 1648.8,758.5 1652.8,722.6 1656.8,753.2 1660.9,812.6 1664.9,778.8 1668.9,778.8 1673.0,793.3 1677.0,758.1 1681.0,797.1 1685.1,747.6 1689.1,728.2 1693.2,708.9 1697.2,744.4 1701.2,780.6 1705.3,797.1 1709.3,791.2 1713.3,758.1 1717.4,793.3 1721.4,751.1 1725.4,719.1 1729.5,715.6 1733.5,789.4 1737.5,704.7 1741.6,740.5 1745.6,706.4 1749.6,818.2 1753.7,722.6 1757.7,777.4 1761.7,715.6 1765.8,747.6 1769.8,724.4 1773.8,701.1 1777.9,753.9 1781.9,761.6 1785.9,740.9 1790.0,720.1 1794.0,704.7 1798.0,831.9 1802.1,760.9 1806.1,747.6 1810.1,733.5 1814.2,704.7 1818.2,813.0 1822.2,768.7 1826.3,768.7 1830.3,781.3 1834.3,814.4 1838.4,803.5 1842.4,818.2 1846.4,728.9 1850.5,708.9 1854.5,756.3 1858.5,733.5 1862.6,786.2 1866.6,754.6 1870.6,722.6 1874.7,786.2"/>
<!-- cpu chart -->
<line x1="770.5" y1="1055.5" x2="782" y2="1055.5" stroke="#c8c8c8" stroke-width="1"/>
<path d="M764.4 1049.2 H766.3 V1058 H764.4 V1052.2 C763.6 1052.9 762.8 1053.2 761.9 1053.4 V1051.7 C763 1051.3 763.9 1050.5 764.4 1049.2 Z" fill="#555"/>
<line x1="778.4" y1="1055.5" x2="778.4" y2="1064" stroke="#e3e3e3"/>
<line x1="780.6" y1="1055.5" x2="780.6" y2="1064" stroke="#e3e3e3"/>
<line x1="872.3" y1="1056" x2="872.3" y2="1064" stroke="#e3e3e3"/>
<line x1="963.5" y1="1056" x2="963.5" y2="1064" stroke="#e3e3e3"/>
<line x1="1054.7" y1="1056" x2="1054.7" y2="1064" stroke="#e3e3e3"/>
<line x1="1146" y1="1056" x2="1146" y2="1064" stroke="#e3e3e3"/>
<line x1="1237.3" y1="1056" x2="1237.3" y2="1064" stroke="#e3e3e3"/>
<line x1="1328.6" y1="1056" x2="1328.6" y2="1064" stroke="#e3e3e3"/>
<line x1="1419.9" y1="1056" x2="1419.9" y2="1064" stroke="#e3e3e3"/>
<line x1="1511.2" y1="1056" x2="1511.2" y2="1064" stroke="#e3e3e3"/>
<line x1="1602.5" y1="1056" x2="1602.5" y2="1064" stroke="#e3e3e3"/>
<line x1="1694.4" y1="1056" x2="1694.4" y2="1064" stroke="#e3e3e3"/>
<line x1="1785.4" y1="1056" x2="1785.4" y2="1064" stroke="#e3e3e3"/>
<polyline points="782.5,1064 782.5,1055.3 1875,1055.3" fill="none" stroke="#3aa3d6" stroke-width="1.7"/>
</svg>
<div class="txt" style="left:87.31px;top:25.00px;font-size:14.30px;font-weight:normal;color:#1a53c6;transform:scaleX(0.9854);transform-origin:0 0;-webkit-text-stroke:0.45px currentColor;">MODEL ENDPOINTS</div>
<div class="txt" style="left:921.25px;top:27.00px;font-size:11.40px;font-weight:normal;color:#0b5fb0;transform:scaleX(1.0256);transform-origin:0 0;-webkit-text-stroke:0.45px currentColor;">ACTIVE</div>
<div class="txt" style="left:1010.68px;top:27.00px;font-size:11.40px;font-weight:normal;color:#8b8b94;transform:scaleX(1.0160);transform-origin:0 0;-webkit-text-stroke:0.45px currentColor;">LOADING</div>
<div class="txt" style="left:95.58px;top:146.00px;font-size:14.30px;font-weight:normal;color:#0c1a36;transform:scaleX(0.9167);transform-origin:0 0;-webkit-text-stroke:0.45px currentColor;">ENDPOINTS LIST</div>
<div class="txt" style="left:536.40px;top:149.00px;font-size:11.40px;font-weight:normal;color:#0d5fad;transform:scaleX(0.9636);transform-origin:0 0;-webkit-text-stroke:0.45px currentColor;">SORTED BY</div>
<div class="txt" style="left:86.65px;top:211.00px;font-size:14.30px;font-weight:normal;color:#ffffff;transform:scaleX(0.9521);transform-origin:0 0;-webkit-text-stroke:0.45px currentColor;">Endpoint_1</div>
<div class="txt" style="left:86.70px;top:244.00px;font-size:15.80px;font-weight:normal;color:#ffffff;transform:scaleX(0.8974);transform-origin:0 0;">Model Reporting</div>
<div class="txt" style="left:594.31px;top:211.00px;font-size:15.70px;font-weight:normal;color:#ffffff;transform:scaleX(0.8927);transform-origin:0 0;">Uptime: 9:18d</div>
<div class="txt" style="left:86.60px;top:309.00px;font-size:15.40px;font-weight:normal;color:#0c1a36;transform:scaleX(0.8987);transform-origin:0 0;-webkit-text-stroke:0.45px currentColor;">Endpoint_2</div>
<div class="txt" style="left:86.60px;top:342.00px;font-size:15.80px;font-weight:normal;color:#0c1a36;transform:scaleX(0.8953);transform-origin:0 0;">Model Reporting 2</div>
<div class="txt" style="left:594.10px;top:309.00px;font-size:15.70px;font-weight:normal;color:#0c1a36;transform:scaleX(0.8958);transform-origin:0 0;">Uptime: 4:15d</div>
<div class="txt" style="left:1241.48px;top:149.00px;font-size:11.40px;font-weight:normal;color:#8a8a94;transform:scaleX(1.0196);transform-origin:0 0;-webkit-text-stroke:0.45px currentColor;">DETAILS</div>
<div class="txt" style="left:1336.96px;top:149.00px;font-size:11.40px;font-weight:normal;color:#0d5fad;transform:scaleX(1.0365);transform-origin:0 0;-webkit-text-stroke:0.45px currentColor;">MONITOR</div>
<div class="txt" style="left:1703.25px;top:213.00px;font-size:15.90px;font-weight:normal;color:#26262c;transform:scaleX(0.9481);transform-origin:0 0;">3 Hours</div>
<div class="txt" style="left:738.09px;top:273.00px;font-size:15.80px;font-weight:normal;color:#1368b3;transform:scaleX(0.8070);transform-origin:0 0;">REQUESTS PER MINUTE</div>
<div class="txt" style="left:738.90px;top:637.00px;font-size:15.80px;font-weight:normal;color:#1368b3;transform:scaleX(0.8366);transform-origin:0 0;">AVERAGE LATENCY (ms)</div>
<div class="txt" style="left:738.39px;top:1001.00px;font-size:15.80px;font-weight:normal;color:#1368b3;transform:scaleX(0.8065);transform-origin:0 0;">CPU COUNT</div>
<div class="txt" style="left:1297.87px;top:552.00px;font-size:15.80px;font-weight:normal;color:#1c2b45;transform:scaleX(0.8802);transform-origin:0 0;">Endpoint_instance_2-25</div>
<div class="txt" style="left:1297.87px;top:916.00px;font-size:15.80px;font-weight:normal;color:#1c2b45;transform:scaleX(0.8802);transform-origin:0 0;">Endpoint_instance_2-25</div>
</body>
</html>
